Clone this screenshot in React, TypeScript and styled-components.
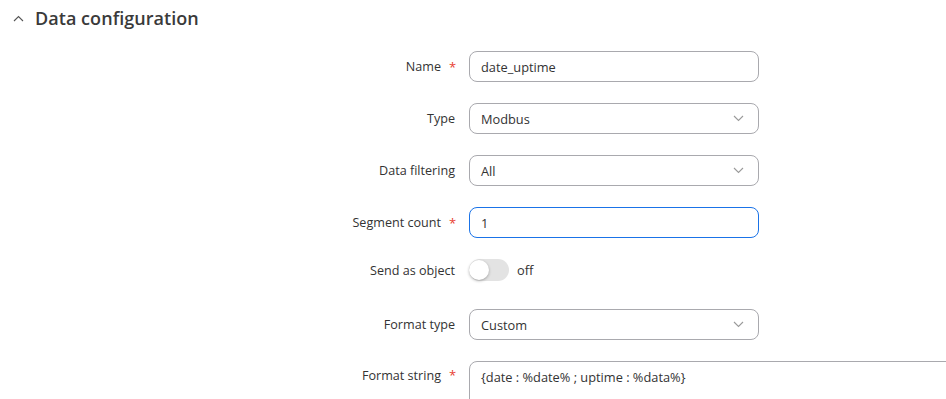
import React from "react";
import styled, { createGlobalStyle } from "styled-components";

const Global = createGlobalStyle`
  html, body { margin: 0; padding: 0; background: #fff; }
  body { font-family: "Open Sans", "Noto Sans", sans-serif; color: #333; overflow: hidden; }
`;

const Page = styled.div`
  width: 946px;
  height: 399px;
  overflow: hidden;
`;

const Header = styled.div`
  display: flex;
  align-items: center;
  height: 36px;
  padding-left: 13px;
  gap: 11px;
`;

const Title = styled.h2`
  margin: 0;
  font-size: 18px;
  font-weight: 600;
  color: #3a3a3a;
  letter-spacing: 0.05px;
`;

const Form = styled.div`
  display: flex;
  flex-direction: column;
  padding-top: 15px;
`;

const Row = styled.div<{ $h?: number }>`
  display: flex;
  align-items: center;
  height: ${(p) => p.$h ?? 31}px;
  margin-bottom: 21px;
`;

const Label = styled.div<{ $top?: number }>`
  width: 469px;
  display: flex;
  justify-content: flex-end;
  align-items: center;
  font-size: 12.6px;
  color: #333;
  padding-right: 14px;
  box-sizing: border-box;
  flex-shrink: 0;
  ${(p) => (p.$top ? `align-self: flex-start; height: ${p.$top}px;` : "")}
`;

const Req = styled.span`
  color: #e8402f;
  margin-left: 8px;
  font-size: 13px;
  width: 6px;
`;

const Field = styled.div<{ $focus?: boolean }>`
  width: 290px;
  height: 31px;
  box-sizing: border-box;
  border: 1px solid ${(p) => (p.$focus ? "#1a73e8" : "#a9a9ae")};
  border-radius: 8px;
  display: flex;
  align-items: center;
  justify-content: space-between;
  padding: 0 14px 0 11px;
  font-size: 12.8px;
  color: #333;
  flex-shrink: 0;
`;

const TextArea = styled.div`
  width: 520px;
  height: 80px;
  box-sizing: border-box;
  border: 1px solid #a9a9ae;
  border-radius: 8px;
  padding: 6px 11px;
  font-size: 12.8px;
  color: #333;
  flex-shrink: 0;
  align-self: flex-start;
`;

const SwitchWrap = styled.div`
  display: flex;
  align-items: center;
  gap: 8px;
  align-self: flex-start;
  font-size: 12.8px;
  color: #333;
`;

const Track = styled.div`
  position: relative;
  width: 40px;
  height: 22px;
  border-radius: 11px;
  background: #e3e3e3;
`;

const Knob = styled.div`
  position: absolute;
  left: 0;
  top: 1px;
  width: 20px;
  height: 20px;
  border-radius: 50%;
  background: #fff;
  box-shadow: 0 1px 3px rgba(0, 0, 0, 0.3);
`;

const Chevron = ({ up }: { up?: boolean }) => (
  <svg width="11" height="7" viewBox="0 0 11 7" fill="none">
    <path
      d={up ? "M1 6 L5.5 1.5 L10 6" : "M1 1 L5.5 5.5 L10 1"}
      stroke={up ? "#555" : "#9a9a9a"}
      strokeWidth="1.1"
    />
  </svg>
);

const Select = ({ value }: { value: string }) => (
  <Field>
    <span>{value}</span>
    <Chevron />
  </Field>
);

export default function App() {
  return (
    <Page>
      <Global />
      <Header>
        <Chevron up />
        <Title>Data configuration</Title>
      </Header>
      <Form>
        <Row>
          <Label>
            Name<Req>*</Req>
          </Label>
          <Field>date_uptime</Field>
        </Row>
        <Row>
          <Label>Type</Label>
          <Select value="Modbus" />
        </Row>
        <Row>
          <Label>Data filtering</Label>
          <Select value="All" />
        </Row>
        <Row>
          <Label>
            Segment count<Req>*</Req>
          </Label>
          <Field $focus>1</Field>
        </Row>
        <Row $h={29}>
          <Label $top={22}>Send as object</Label>
          <SwitchWrap>
            <Track>
              <Knob />
            </Track>
            <span>off</span>
          </SwitchWrap>
        </Row>
        <Row>
          <Label>Format type</Label>
          <Select value="Custom" />
        </Row>
        <Row $h={80}>
          <Label $top={28}>
            Format string<Req>*</Req>
          </Label>
          <TextArea>{"{date : %date% ; uptime : %data%}"}</TextArea>
        </Row>
      </Form>
    </Page>
  );
}
